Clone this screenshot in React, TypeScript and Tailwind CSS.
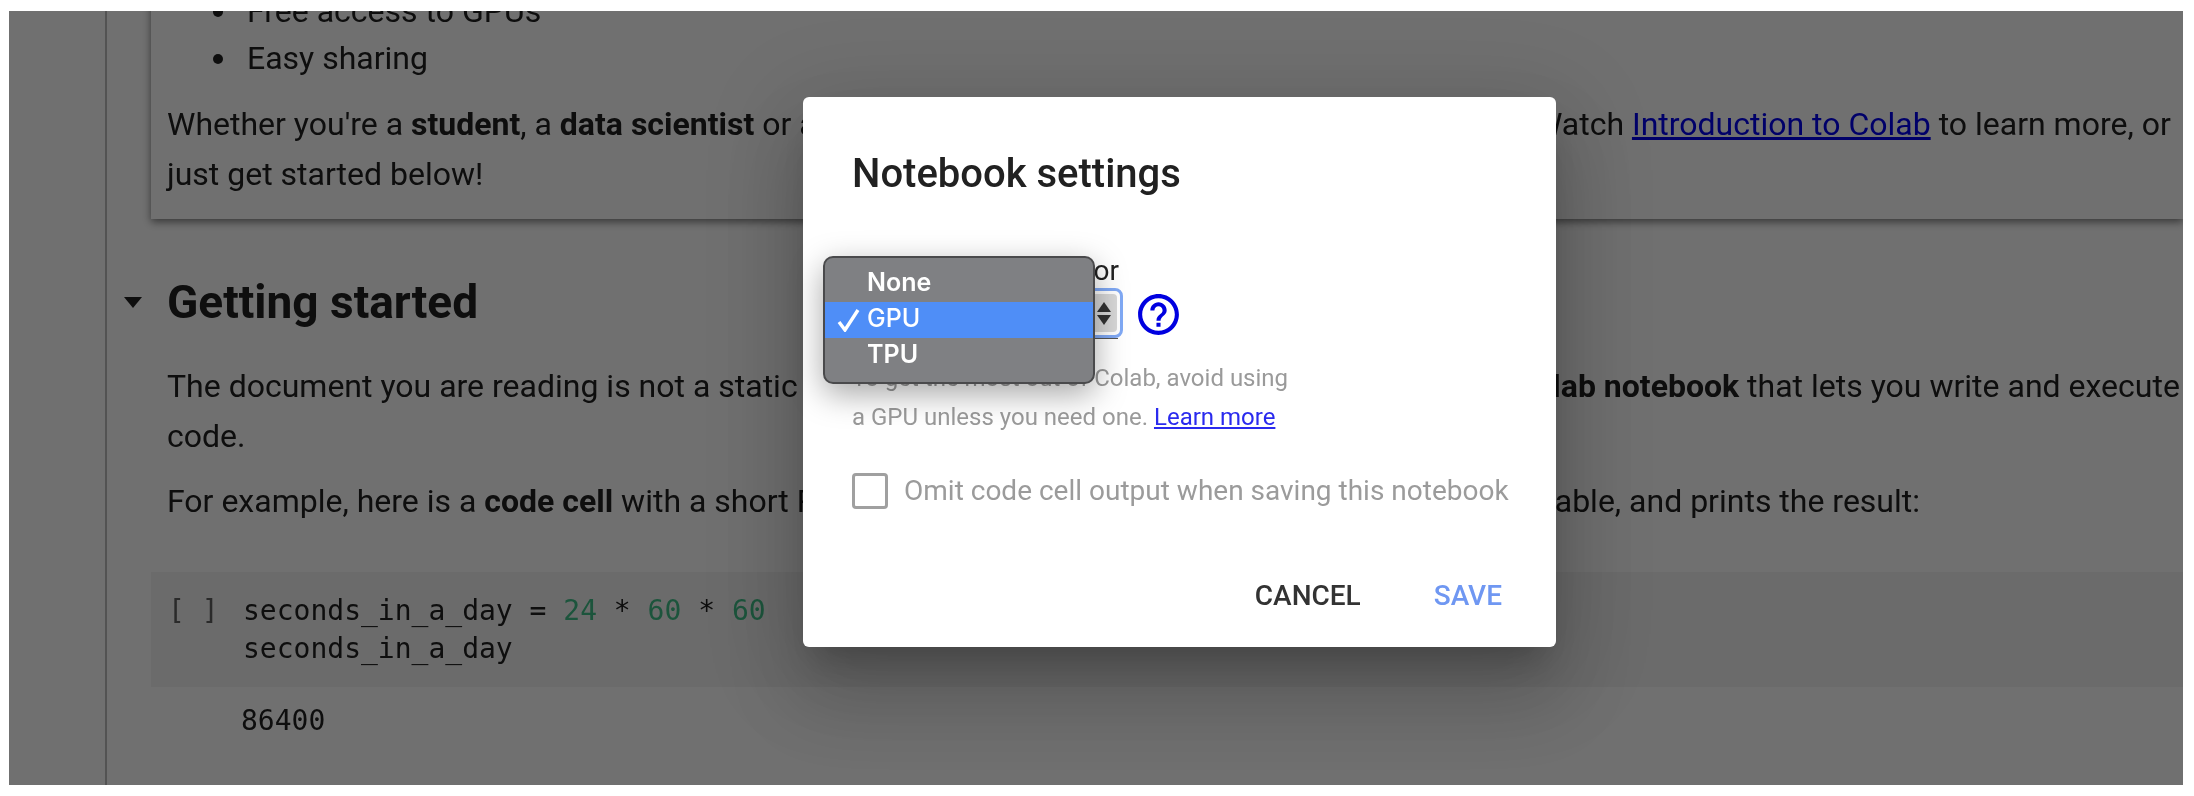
import { MdHelpOutline } from "react-icons/md";

const roboto = "font-['Roboto',sans-serif]";

function Code() {
  return (
    <div className="mt-[46px] flex h-[115px] bg-[#f4f4f4] font-['DejaVu_Sans_Mono',monospace] text-[28px] leading-[38px] text-[#212121]">
      <div className="w-[92px] pt-[20px] pl-[17px] text-[#616161]">[ ]</div>
      <div className="pt-[20px]">
        <div className="whitespace-pre">
          seconds_in_a_day = <span className="text-[#40c088]">24</span> * <span className="text-[#40c088]">60</span> * <span className="text-[#40c088]">60</span>
        </div>
        <div>seconds_in_a_day</div>
      </div>
    </div>
  );
}

function Dropdown() {
  return (
    <div className="absolute left-[-32px] top-[-35px] flex h-[128px] w-[272px] flex-col justify-center rounded-[10px] border-2 border-[#4a4a4c] bg-[#7f8083] pb-[1px] font-['Inter',sans-serif] text-[25px] font-semibold text-white shadow-[0_10px_32px_rgba(0,0,0,0.35)]">
      <div className="flex h-[36px] items-center pb-[3px] pl-[42px]">None</div>
      <div className="relative flex h-[36px] items-center bg-[#4f8ef7] pb-[3px] pl-[42px] font-medium">
        <svg className="absolute left-[11px] top-[6px]" width="26" height="24" viewBox="0 0 26 24" fill="none">
          <path d="M3 14 L9 22 L22 2" stroke="white" strokeWidth="3.4" />
        </svg>
        GPU
      </div>
      <div className="flex h-[36px] items-center pb-[3px] pl-[42px]">TPU</div>
    </div>
  );
}

function Dialog() {
  return (
    <div className={`${roboto} absolute left-[794px] top-[86px] h-[550px] w-[753px] rounded-[6px] bg-white pl-[49px] pr-[40px] shadow-[0_48px_76px_6px_rgba(0,0,0,0.14),0_18px_92px_16px_rgba(0,0,0,0.12),0_22px_30px_-14px_rgba(0,0,0,0.2)]`}>
      <h2 className="pt-[54px] text-[40px] font-medium leading-[46px] text-[#212121]">Notebook settings</h2>
      <div className="mt-[58px] text-[28px] leading-[32px] text-[#212121]">Hardware accelerator</div>
      <div className="flex items-center">
        <div className="relative h-[50px] w-[271px] rounded-[8px] border-[3px] border-[#80a9f5] bg-white">
          <div className="absolute right-[3px] top-[3px] flex h-[38px] w-[26px] flex-col items-center justify-center gap-[3px] rounded-[4px] bg-[#d8d8d8]">
            <div className="h-0 w-0 border-x-[7px] border-b-[10px] border-x-transparent border-b-[#333]" />
            <div className="h-0 w-0 border-x-[7px] border-t-[10px] border-x-transparent border-t-[#333]" />
          </div>
          <div className="absolute bottom-[-4px] left-0 right-[2px] h-[1px] bg-[#555]" />
          <Dropdown />
        </div>
        <MdHelpOutline className="ml-[11px] mt-[3px] text-[49px] text-[#0000e0]" />
      </div>
      <p className="mt-[20px] text-[24px] leading-[39px] text-[#9a9a9a]">
        To get the most out of Colab, avoid using
        <br />
        a GPU unless you need one. <a className="text-[#2a2aee] underline">Learn more</a>
      </p>
      <label className="mt-[36px] flex items-center gap-[16px] whitespace-nowrap text-[28px] leading-[36px] text-[#9b9b9b]">
        <span className="h-[36px] w-[36px] shrink-0 rounded-[4px] border-[3px] border-[#a0a0a0]" />
        Omit code cell output when saving this notebook
      </label>
      <div className="mt-[71px] flex justify-end gap-[73px] pr-[14px] text-[28px] font-medium leading-[32px]">
        <span className="text-[#333]">CANCEL</span>
        <span className="text-[#6f97f2]">SAVE</span>
      </div>
    </div>
  );
}

function Bullet({ children }: { children: string }) {
  return (
    <li className="flex h-[47px] items-center leading-[47px]">
      <span className="mr-[24px] h-[10px] w-[10px] rounded-full bg-[#212121]" />
      {children}
    </li>
  );
}

export default function App() {
  return (
    <div className="h-[796px] w-[2194px] bg-white pb-[11px] pl-[9px] pr-[11px] pt-[11px] blur-[0.5px]">
      <div className={`${roboto} relative flex h-full overflow-hidden bg-white text-[32px] leading-[50px] text-[#212121]`}>
        <div className="w-[98px] shrink-0 border-r-2 border-[#bdbdbd]" />
        <div className="min-w-0 flex-1 pl-[44px]">
          <div className="-mt-[23px] h-[231px] pl-[16px] pr-[4px] shadow-[0_3px_8px_rgba(0,0,0,0.5)]">
            <ul className="list-none pl-[46px]">
              <Bullet>Free access to GPUs</Bullet>
              <Bullet>Easy sharing</Bullet>
            </ul>
            <p className="mt-[17px]">
              Whether you're a <b>student</b>, a <b>data scientist</b> or an <b>AI researcher</b>, Colab can make your work easier. Watch <a className="text-[#0000ee] underline">Introduction to Colab</a> to learn more, or just get started below!
            </p>
          </div>
          <h1 className="relative mt-[57px] pl-[16px] text-[46px] font-bold leading-[52px] text-[#212121]">
            <span className="absolute left-[-27px] top-[21px] h-0 w-0 border-x-[9px] border-t-[11px] border-x-transparent border-t-[#212121]" />
            Getting started
          </h1>
          <p className="mt-[33px] pl-[16px] pr-[2px]">
            The document you are reading is not a static web page, but an interactive environment called a <b>Colab notebook</b> that lets you write and execute code.
          </p>
          <p className="mt-[15px] pl-[16px]">
            For example, here is a <b>code cell</b> with a short Python script that computes a value, stores it in a variable, and prints the result:
          </p>
          <Code />
          <pre className="mt-[15px] pl-[90px] font-['DejaVu_Sans_Mono',monospace] text-[28px] leading-[38px]">86400</pre>
        </div>
        <div className="absolute inset-0 bg-black/[.56]" />
        <Dialog />
      </div>
    </div>
  );
}
